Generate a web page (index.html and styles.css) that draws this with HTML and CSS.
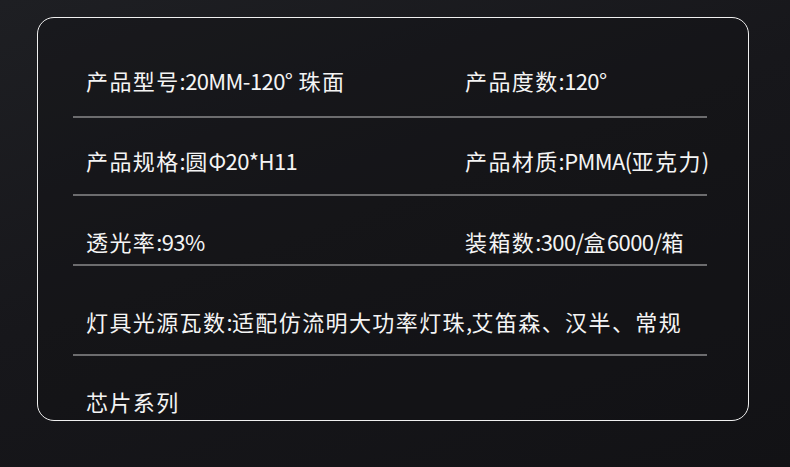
FILE: index.html
```html
<!DOCTYPE html>
<html lang="zh-CN">
<head>
<meta charset="utf-8">
<title>产品参数</title>
<link rel="stylesheet" href="styles.css">
</head>
<body>
<div class="page">
  <section class="card">
    <div class="row r1">
      <span class="cell">产品型号<span class="lat">:20MM-120°</span> 珠面</span>
      <span class="cell">产品度数<span class="lat">:120°</span></span>
    </div>
    <div class="row r2">
      <span class="cell">产品规格<span class="lat">:</span>圆<span class="lat">Φ20*H11</span></span>
      <span class="cell">产品材质<span class="lat">:PMMA(</span>亚克力<span class="lat">)</span></span>
    </div>
    <div class="row r3">
      <span class="cell">透光率<span class="lat">:93%</span></span>
      <span class="cell">装箱数<span class="lat">:300/</span>盒<span class="lat">6000/</span>箱</span>
    </div>
    <div class="row r4 wide">
      <span class="cell">灯具光源瓦数<span class="lat">:</span>适配仿流明大功率灯珠<span class="lat">,</span>艾笛森、汉半、常规</span>
    </div>
    <div class="row r5 wide last">
      <span class="cell">芯片系列</span>
    </div>
  </section>
</div>
</body>
</html>
```

FILE: styles.css
```css
html, body {
  margin: 0;
  padding: 0;
}
body {
  width: 790px;
  height: 467px;
  overflow: hidden;
  background: linear-gradient(160deg, #1e1f23 0%, #17171b 45%, #121215 100%);
  font-family: "Noto Sans CJK SC", "Noto Sans", sans-serif;
  color: #f4f4f4;
}
.page {
  padding: 17px 0 0 37px;
}
.card {
  box-sizing: border-box;
  width: 712px;
  height: 404px;
  border: 1px solid #f0f0f0;
  border-radius: 17px;
  overflow: hidden;
  padding: 0 41px 0 35px;
  background: rgba(16, 16, 19, 0.35);
}
.row {
  display: grid;
  grid-template-columns: 379px 1fr;
  padding-left: 13px;
  border-bottom: 2px solid #6c6c6e;
  font-size: 22px;
  line-height: 30px;
  letter-spacing: 1.4px;
  white-space: nowrap;
}
.lat {
  font-family: "Noto Sans CJK SC", sans-serif;
  letter-spacing: -0.6px;
}
.row.wide {
  grid-template-columns: 1fr;
}
.row.last {
  border-bottom: none;
}
.r1 { padding-top: 47px; padding-bottom: 21px; }
.r2 { padding-top: 27px; padding-bottom: 19px; }
.r3 { padding-top: 30px; padding-bottom: 8px; }
.r4 { padding-top: 40px; padding-bottom: 18px; }
.r5 { padding-top: 30px; }
```
